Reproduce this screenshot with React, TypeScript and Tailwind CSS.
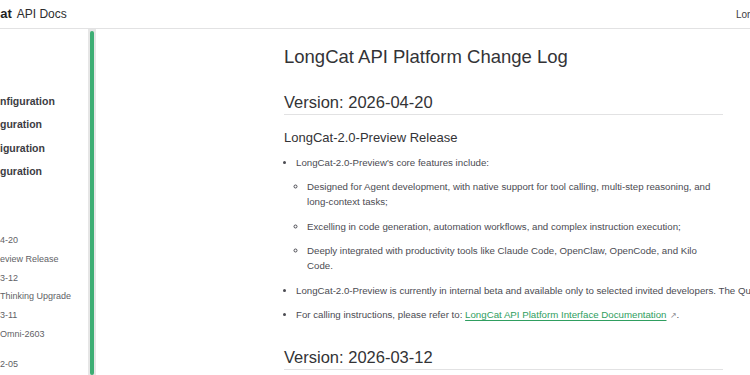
import React from 'react'

const boldItems = ['nfiguration', 'guration', 'iguration', 'guration']
const smallItems = ['4-20', 'eview Release', '3-12', 'Thinking Upgrade', '3-11', 'Omni-2603']

function Sidebar() {
  return (
    <aside className="flex w-[96px] shrink-0">
      <div className="w-[88px] shrink-0 overflow-hidden pt-[61px]">
        <ul className="text-[10.5px] font-bold text-[#3c3c43]">
          {boldItems.map((t, i) => (
            <li key={i} className="whitespace-nowrap leading-[23.3px]">
              {t}
            </li>
          ))}
        </ul>
        <ul className="mt-[48px] text-[9px] text-[#5f5f66]">
          {smallItems.map((t, i) => (
            <li key={i} className="whitespace-nowrap leading-[18.7px]">
              {t}
            </li>
          ))}
        </ul>
        <div className="mt-[12px] whitespace-nowrap text-[9px] leading-[18.7px] text-[#5f5f66]">2-05</div>
      </div>
      {/* scrollbar track */}
      <div className="w-[8px] shrink-0 bg-[#e6e6e6] px-[2px] pt-[2px]">
        <div className="h-full rounded-sm bg-[#3dae74]" />
      </div>
    </aside>
  )
}

export default function App() {
  return (
    <div className="h-[375px] w-[750px] overflow-hidden bg-white font-['Liberation_Sans',Arial,sans-serif] text-[#3c3c43]">
      <header className="flex h-[29px] items-center overflow-hidden border-b border-[#e2e2e3]">
        <div className="flex w-[736px] shrink-0 items-center">
          <span className="-ml-[41px] whitespace-nowrap text-[13px] font-bold text-[#1f1f1f]">LongCat</span>
          <span className="ml-[5px] whitespace-nowrap text-[12px] font-medium text-[#2c2c2e]">API Docs</span>
        </div>
        <span className="shrink-0 whitespace-nowrap text-[10px] text-[#3c3c43]">LongCat API Platform</span>
      </header>

      <div className="flex h-[346px]">
        <Sidebar />

        <main className="shrink-0 pl-[188px] pt-[16px]">
          <div className="w-[439px]">
            <h1 className="text-[18.5px] leading-[24px] text-[#333336]">LongCat API Platform Change Log</h1>

            <h2 className="mt-[22px] border-b border-[#e2e2e3] pb-[1px] text-[16.5px] leading-[22px] text-[#333336]">
              Version: 2026-04-20
            </h2>

            <h3 className="mt-[14px] text-[13px] leading-[18px] text-[#333336]">LongCat-2.0-Preview Release</h3>

            <ul className="mt-[7.5px] list-disc pl-[12px] text-[9.7px] leading-[15px] text-[#4b4b52] marker:text-[#4b4b52]">
              <li>
                LongCat-2.0-Preview's core features include:
                <ul className="list-[circle] pl-[11px]">
                  <li className="mt-[9.5px]">
                    Designed for Agent development, with native support for tool calling, multi-step reasoning, and
                    long-context tasks;
                  </li>
                  <li className="mt-[9.5px]">
                    Excelling in code generation, automation workflows, and complex instruction execution;
                  </li>
                  <li className="mt-[9.5px]">
                    Deeply integrated with productivity tools like Claude Code, OpenClaw, OpenCode, and Kilo Code.
                  </li>
                </ul>
              </li>
              <li className="mt-[9.5px] whitespace-nowrap">
                LongCat-2.0-Preview is currently in internal beta and available only to selected invited developers.
                The Quota is limited.
              </li>
              <li className="mt-[9.5px]">
                For calling instructions, please refer to:{' '}
                <a className="text-[#2f9e60] underline underline-offset-2" href="#">
                  LongCat API Platform Interface Documentation
                </a>
                <span className="ml-[3px] text-[8px] text-[#8a8a90]">↗</span>.
              </li>
            </ul>

            <h2 className="mt-[22.5px] border-b border-[#e2e2e3] pb-[1px] text-[16.5px] leading-[22px] text-[#333336]">
              Version: 2026-03-12
            </h2>
          </div>
        </main>
      </div>
    </div>
  )
}
